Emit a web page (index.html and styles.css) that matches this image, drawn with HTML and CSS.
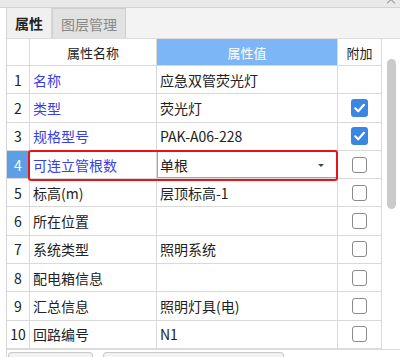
FILE: index.html
```html
<!DOCTYPE html>
<html lang="zh">
<head>
<meta charset="utf-8">
<link rel="stylesheet" href="styles.css">
</head>
<body>
<div class="topband"><span class="uparrow"></span></div>
<div class="panel">
  <div class="tabs">
    <div class="tab active">属性</div>
    <div class="tab">图层管理</div>
  </div>
  <div class="body">
    <div class="grid">
      <div class="c num hd"></div>
      <div class="c name hd center">属性名称</div>
      <div class="c val hd blue center">属性值</div>
      <div class="c add hd center">附加</div>

      <div class="c num">1</div>
      <div class="c name link">名称</div>
      <div class="c val">应急双管荧光灯</div>
      <div class="c add"></div>

      <div class="c num">2</div>
      <div class="c name link">类型</div>
      <div class="c val">荧光灯</div>
      <div class="c add"><span class="cb on"><svg viewBox="0 0 16 16"><path d="M4 8.3l2.8 2.8L12.2 5" fill="none" stroke="#fff" stroke-width="2" stroke-linecap="round" stroke-linejoin="round"/></svg></span></div>

      <div class="c num">3</div>
      <div class="c name link">规格型号</div>
      <div class="c val">PAK-A06-228</div>
      <div class="c add"><span class="cb on"><svg viewBox="0 0 16 16"><path d="M4 8.3l2.8 2.8L12.2 5" fill="none" stroke="#fff" stroke-width="2" stroke-linecap="round" stroke-linejoin="round"/></svg></span></div>

      <div class="c num sel">4</div>
      <div class="c name link hl">可连立管根数<span class="redbox"></span></div>
      <div class="c val edit">单根<span class="caret"></span></div>
      <div class="c add"><span class="cb"></span></div>

      <div class="c num">5</div>
      <div class="c name">标高(m)</div>
      <div class="c val">层顶标高-1</div>
      <div class="c add"><span class="cb"></span></div>

      <div class="c num">6</div>
      <div class="c name">所在位置</div>
      <div class="c val"></div>
      <div class="c add"><span class="cb"></span></div>

      <div class="c num">7</div>
      <div class="c name">系统类型</div>
      <div class="c val">照明系统</div>
      <div class="c add"><span class="cb"></span></div>

      <div class="c num">8</div>
      <div class="c name">配电箱信息</div>
      <div class="c val"></div>
      <div class="c add"><span class="cb"></span></div>

      <div class="c num">9</div>
      <div class="c name">汇总信息</div>
      <div class="c val">照明灯具(电)</div>
      <div class="c add"><span class="cb"></span></div>

      <div class="c num">10</div>
      <div class="c name">回路编号</div>
      <div class="c val">N1</div>
      <div class="c add"><span class="cb"></span></div>
    </div>
    <div class="vscroll"><div class="thumb"></div></div>
  </div>
  <div class="bottom">
    <div class="btab w1"></div>
    <div class="btab w2"></div>
  </div>
</div>
</body>
</html>
```

FILE: styles.css
```css
html, body {
  margin: 0;
  padding: 0;
  background: #ffffff;
  font-family: "Noto Sans CJK SC", "Noto Sans", sans-serif;
  color: #222;
  width: 400px;
  height: 357px;
  overflow: hidden;
}
.topband {
  height: 7px;
  background: #e9e9e9;
  border-bottom: 1px solid #d2d2d2;
  position: relative;
}
.uparrow {
  position: absolute;
  right: 6px;
  top: 0px;
  width: 5px;
  height: 5px;
  border-left: 1px solid #999;
  border-top: 1px solid #999;
  transform: rotate(45deg);
}
.panel {
  margin-left: 6px;
  border-left: 1px solid #d4d4d4;
}
.tabs {
  height: 30px;
  background: #f3f3f3;
  display: flex;
  align-items: stretch;
}
.tab {
  font-size: 14px;
  line-height: 30px;
  padding: 0 8px;
  color: #888;
  background: #e2e2e2;
  border: 1px solid #cfcfcf;
  border-bottom: none;
  box-sizing: border-box;
}
.tab.active {
  background: #f0f0f0;
  color: #222;
  font-weight: 600;
  border: none;
  border-right: 1px solid #d8d8d8;
  width: 45px;
  padding: 0 0 0 8px;
}
.body {
  display: flex;
  border-top: 1px solid #dcdcdc;
}
.grid {
  display: grid;
  grid-template-columns: 23px 127px 181px 44px;
  grid-template-rows: 27px;
  grid-auto-rows: 28.3px;
}
.c {
  border-right: 1px solid #d9d9d9;
  border-bottom: 1px solid #d9d9d9;
  font-size: 14px;
  display: flex;
  align-items: center;
  white-space: nowrap;
  overflow: hidden;
}
.num { justify-content: center; }
.name { padding-left: 3px; }
.val { padding-left: 3px; }
.add { justify-content: center; }
.hd { font-size: 13px; }
.center { justify-content: center; padding-left: 0; }
.hd.blue {
  background: #7db6f6;
  color: #fff;
}
.link { color: #3940e6; }
.num.sel {
  background: #5d9fe6;
  color: #fff;
}
.name.hl {
  position: relative;
  overflow: visible;
  z-index: 2;
}
.redbox {
  position: absolute;
  left: -2px;
  top: -1px;
  width: 310px;
  height: 31px;
  box-sizing: border-box;
  border: 2px solid #e8141c;
  border-radius: 3px;
  pointer-events: none;
}
.val.edit {
  position: relative;
  box-shadow: inset 0 0 0 1px #7aaee6;
}
.caret {
  position: absolute;
  right: 13px;
  top: 13px;
  width: 0;
  height: 0;
  border-left: 3px solid transparent;
  border-right: 3px solid transparent;
  border-top: 3px solid #444;
}
.cb {
  width: 13px;
  height: 14px;
  border: 1.5px solid #8a8a8a;
  border-radius: 3px;
  background: #fff;
  display: block;
}
.cb.on {
  width: 17px;
  height: 18px;
  border: none;
  background: #3b86e2;
}
.cb svg { width: 17px; height: 18px; display: block; }
.vscroll {
  width: 18px;
  position: relative;
  background: #fff;
}
.thumb {
  margin: 20px 0 0 5px;
  width: 9px;
  height: 150px;
  background: #cacaca;
  border-radius: 5px;
}
.bottom {
  border-top: 1px solid #dcdcdc;
  height: 8px;
  display: flex;
  gap: 10px;
  padding: 2px 0 0 1px;
  box-sizing: border-box;
}
.btab {
  height: 8px;
  background: #f2f2f2;
  border: 1px solid #c9c9c9;
  border-bottom: none;
  border-radius: 4px 4px 0 0;
  box-sizing: border-box;
}
.w1 { width: 85px; }
.w2 { width: 181px; }
```
